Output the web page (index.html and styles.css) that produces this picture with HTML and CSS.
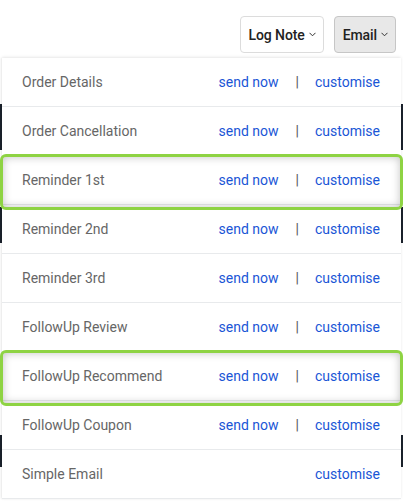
FILE: index.html
```html
<!DOCTYPE html>
<html lang="en">

<head>
    <meta charset="UTF-8">
    <title>Email Templates</title>
    <link rel="stylesheet" href="styles.css">
</head>

<body>

    <div class="toolbar">
        <button class="drop">Log Note
            <svg class="chev" width="7" height="5" viewBox="0 0 7 5"><polyline points="0.5,0.8 3.5,3.8 6.5,0.8" /></svg>
        </button>
        <button class="drop active">Email
            <svg class="chev" width="7" height="5" viewBox="0 0 7 5"><polyline points="0.5,0.8 3.5,3.8 6.5,0.8" /></svg>
        </button>
    </div>

    <ul class="menu">
        <li class="item">
            <span class="name">Order Details</span>
            <span class="actions"><a href="#">send now</a><span class="sep">|</span><a href="#">customise</a></span>
        </li>
        <li class="item">
            <span class="name">Order Cancellation</span>
            <span class="actions"><a href="#">send now</a><span class="sep">|</span><a href="#">customise</a></span>
        </li>
        <li class="item marked">
            <span class="name">Reminder 1st</span>
            <span class="actions"><a href="#">send now</a><span class="sep">|</span><a href="#">customise</a></span>
        </li>
        <li class="item">
            <span class="name">Reminder 2nd</span>
            <span class="actions"><a href="#">send now</a><span class="sep">|</span><a href="#">customise</a></span>
        </li>
        <li class="item">
            <span class="name">Reminder 3rd</span>
            <span class="actions"><a href="#">send now</a><span class="sep">|</span><a href="#">customise</a></span>
        </li>
        <li class="item">
            <span class="name">FollowUp Review</span>
            <span class="actions"><a href="#">send now</a><span class="sep">|</span><a href="#">customise</a></span>
        </li>
        <li class="item marked">
            <span class="name">FollowUp Recommend</span>
            <span class="actions"><a href="#">send now</a><span class="sep">|</span><a href="#">customise</a></span>
        </li>
        <li class="item">
            <span class="name">FollowUp Coupon</span>
            <span class="actions"><a href="#">send now</a><span class="sep">|</span><a href="#">customise</a></span>
        </li>
        <li class="item">
            <span class="name">Simple Email</span>
            <span class="actions"><a href="#">customise</a></span>
        </li>
    </ul>

</body>

</html>
```

FILE: styles.css
```css
html,
body {
    margin: 0;
    font-family: Roboto, "Liberation Sans", Arial, sans-serif;
    font-size: 14px;
}

body {
    height: 502px;
    overflow: hidden;
    background: linear-gradient(to bottom,
            #fff 0 104px,
            #1b222c 104px 150px,
            #fff 150px 207px,
            #1b222c 207px 243px,
            #fff 243px 435px,
            #1b222c 435px 467px,
            #fff 467px);
}

.toolbar {
    display: flex;
    justify-content: flex-end;
    gap: 10px;
    padding: 16px 7px 5px 0;
    background: #fff;
}

.drop {
    display: flex;
    align-items: center;
    gap: 4px;
    height: 37px;
    padding: 0 7px 0 8px;
    background: #fff;
    border: 1px solid #dcdcdc;
    border-radius: 4px;
    font-family: inherit;
    font-size: 14px;
    font-weight: 500;
    letter-spacing: -0.1px;
    color: #222;
    cursor: pointer;
}

.drop.active {
    background: #e8e8e8;
    border-color: #c6c6c6;
}

.chev {
    fill: none;
    stroke: #333;
    stroke-width: 1;
}

.menu {
    list-style: none;
    margin: 0 2px;
    padding: 0;
    background: #fff;
    box-shadow: 0 -1px 3px rgba(0, 0, 0, 0.08), -1px 0 2px rgba(0, 0, 0, 0.06);
}

.item {
    display: flex;
    justify-content: space-between;
    align-items: center;
    height: 48px;
    padding: 0 21px 0 20px;
    border-bottom: 1px solid #e8eaec;
    position: relative;
}

.name {
    color: #666;
}

.actions {
    display: flex;
    align-items: center;
}

.actions a {
    color: #1a56d6;
    text-decoration: none;
}

.sep {
    color: #555;
    margin: 0 16px 0 17px;
}

.marked::after {
    content: "";
    position: absolute;
    top: -2px;
    bottom: -6px;
    left: -2px;
    right: -2px;
    border: 3.5px solid #8ed343;
    border-radius: 6px;
    box-shadow: inset 0 0 9px rgba(0, 0, 0, 0.24);
    pointer-events: none;
}
```
